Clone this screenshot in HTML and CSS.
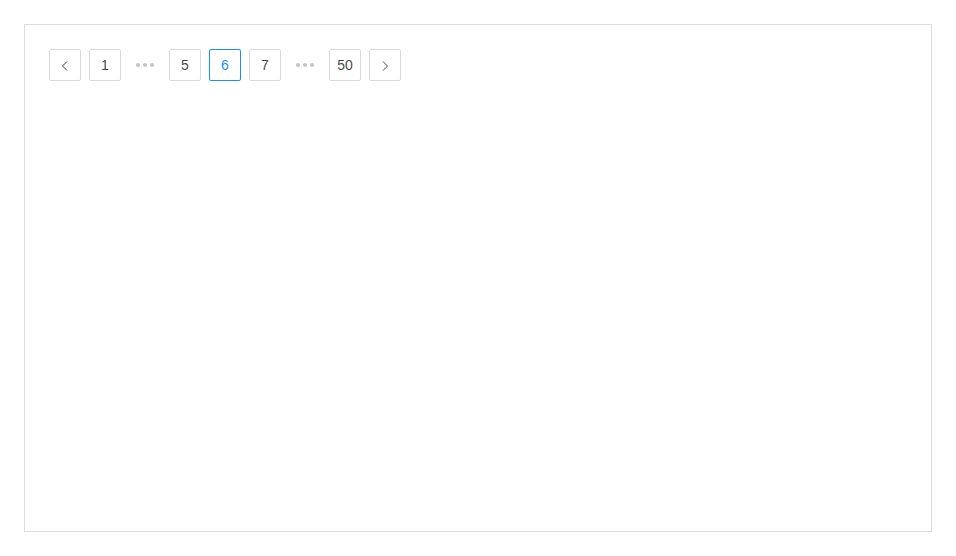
FILE: index.html
```html
<!DOCTYPE html>
<html lang="en">
<head>
  <meta charset="UTF-8">
  <title>Pagination</title>
  <link rel="stylesheet" href="styles.css">
</head>
<body>
  <div class="frame">
    <ul class="pagination">
      <li class="page-item arrow">
        <svg viewBox="0 0 12 12" width="12" height="12"><path d="M8 1.5 L3.5 6 L8 10.5" fill="none" stroke="currentColor" stroke-width="1"/></svg>
      </li>
      <li class="page-item">1</li>
      <li class="jump"><span></span><span></span><span></span></li>
      <li class="page-item">5</li>
      <li class="page-item active">6</li>
      <li class="page-item">7</li>
      <li class="jump"><span></span><span></span><span></span></li>
      <li class="page-item">50</li>
      <li class="page-item arrow">
        <svg viewBox="0 0 12 12" width="12" height="12"><path d="M4 1.5 L8.5 6 L4 10.5" fill="none" stroke="currentColor" stroke-width="1"/></svg>
      </li>
    </ul>
  </div>
</body>
</html>
```

FILE: styles.css
```css
html, body {
  margin: 0;
  background: #fff;
}

body {
  padding: 24px;
  font-family: "Liberation Sans", Arial, sans-serif;
}

.frame {
  box-sizing: border-box;
  height: 508px;
  border: 1px solid #dcdcdc;
  padding: 24px;
}

.pagination {
  display: flex;
  gap: 8px;
  list-style: none;
  margin: 0;
  padding: 0;
}

.page-item {
  box-sizing: border-box;
  width: 32px;
  height: 32px;
  display: flex;
  align-items: center;
  justify-content: center;
  border: 1px solid #d9d9d9;
  border-radius: 2px;
  font-size: 14px;
  color: rgba(0, 0, 0, 0.75);
  cursor: pointer;
}

.page-item.active {
  border-color: #1890ff;
  color: #1890ff;
}

.arrow {
  color: rgba(0, 0, 0, 0.75);
}

.arrow svg {
  display: block;
  margin-top: 1px;
}

.jump {
  width: 32px;
  height: 32px;
  display: flex;
  align-items: center;
  justify-content: center;
  gap: 3px;
}

.jump span {
  width: 4px;
  height: 4px;
  border-radius: 50%;
  background: #c4c4c4;
}
```
